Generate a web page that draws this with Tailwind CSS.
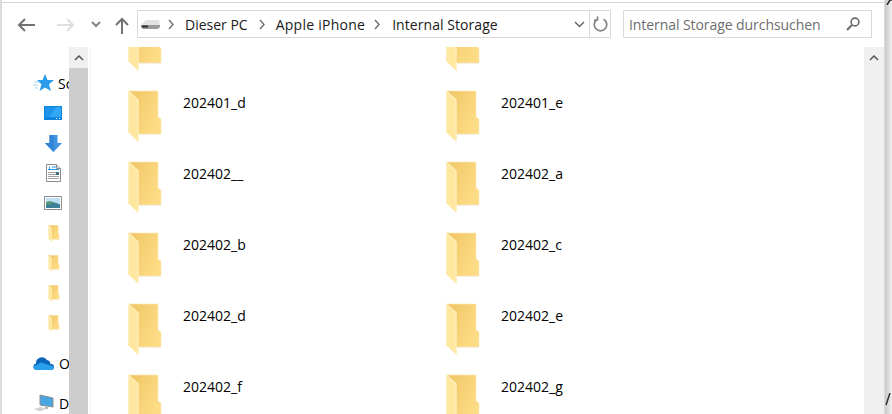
<!DOCTYPE html>
<html lang="en">
<head>
  <meta charset="UTF-8">
  <title>Internal Storage</title>
  <script src="https://cdn.jsdelivr.net/npm/@tailwindcss/browser@4"></script>
</head>
<body class="w-[892px] h-[414px] overflow-hidden bg-white font-['Open_Sans',sans-serif] text-[14px] text-black">
  <svg class="absolute w-0 h-0">
    <defs>
      <linearGradient id="fback" x1="0" x2="1" y1="0" y2="0.6"><stop offset="0" stop-color="#efc565"/><stop offset="1" stop-color="#fedc85"/></linearGradient>
      <g id="folder">
        <path d="M1 1h29v26l3 2v15H8z" fill="url(#fback)" stroke="#fdeab8" stroke-width=".6"/>
        <path d="M0 0l10.500 9.500V52L0 42z" fill="#ffe79f"/>
        <path d="M0 0l10.500 9.500V52l-1-1V10L1 2v39H0z" fill="#fdf0c4"/>
        <path d="M11 44h22v1H11z" fill="#f3f1ea"/>
      </g>
    </defs>
  </svg>
  <div class="flex h-[414px]">
    <div class="w-[885px] h-full flex flex-col pt-[2px] border-l-2 border-r border-[#dcdcdc]">
      <div class="border-t border-[#d6d6d6]"></div>
      <!-- toolbar -->
      <div class="h-[44px] flex items-start pt-[7px] shrink-0">
        <svg class="shrink-0 ml-[15px] mt-[8px]" width="20" height="14" viewBox="0 0 20 14" fill="none" stroke="#737373" stroke-width="2"><path d="M18 7H2M8 1L2 7l6 6"/></svg>
        <svg class="shrink-0 ml-[19px] mt-[8px]" width="20" height="14" viewBox="0 0 20 14" fill="none" stroke="#dedede" stroke-width="2"><path d="M1 7h16M11 1l6 6-6 6"/></svg>
        <svg class="shrink-0 ml-[14px] mt-[11px]" width="12" height="8" viewBox="0 0 12 8" fill="none" stroke="#858585" stroke-width="2"><path d="M2 1l4 4 4-4"/></svg>
        <svg class="shrink-0 ml-[13px] mt-[7px]" width="14" height="17" viewBox="0 0 14 17" fill="none" stroke="#737373" stroke-width="2"><path d="M7 17V2M1 8l6-6 6 6"/></svg>
        <!-- address bar -->
        <div class="ml-[8px] w-[474px] h-[28px] border border-[#d9d9d9] flex items-center text-[#1a1a1a] shrink-0">
          <svg class="shrink-0 ml-[3px]" width="19" height="12" viewBox="0 0 19 12"><path d="M0 7l5-5h13l1 5z" fill="#e2e2e2"/><path d="M0 7h19v2l-2 2H2L0 9z" fill="#9a9a9a"/><path d="M1 7.500h6v2H1z" fill="#2e2e2e"/></svg>
          <svg class="shrink-0 ml-[8px]" width="7" height="11" viewBox="0 0 7 11" fill="none" stroke="#737373" stroke-width="1.5"><path d="M1 1l4 4.500-4 4.500"/></svg>
          <span class="ml-[10px]">Dieser PC</span>
          <svg class="shrink-0 ml-[11px]" width="7" height="11" viewBox="0 0 7 11" fill="none" stroke="#737373" stroke-width="1.5"><path d="M1 1l4 4.500-4 4.500"/></svg>
          <span class="ml-[10px] tracking-[0.25px]">Apple iPhone</span>
          <svg class="shrink-0 ml-[9px]" width="7" height="11" viewBox="0 0 7 11" fill="none" stroke="#737373" stroke-width="1.5"><path d="M1 1l4 4.500-4 4.500"/></svg>
          <span class="ml-[11px] tracking-[0.06px]">Internal Storage</span>
          <svg class="shrink-0 ml-auto mr-[4px]" width="11" height="7" viewBox="0 0 11 7" fill="none" stroke="#666" stroke-width="1.5"><path d="M1 1l4.500 4.500L10 1"/></svg>
          <div class="w-[21px] h-full border-l border-[#d9d9d9] flex items-center justify-center shrink-0">
            <svg width="15" height="16" viewBox="0 0 15 16" fill="none" stroke="#858585" stroke-width="1.7"><path d="M4.500 3.200a6.200 6.200 0 1 0 6 0M4.500 .5v3.500H1"/></svg>
          </div>
        </div>
        <!-- search -->
        <div class="ml-[12px] w-[249px] h-[28px] border border-[#d9d9d9] flex items-center justify-between pl-[5px] pr-[11px] text-[#6d6d6d] shrink-0">
          <span class="tracking-[-0.07px]">Internal Storage durchsuchen</span>
          <svg class="shrink-0" width="14" height="14" viewBox="0 0 14 14" fill="none" stroke="#6b6b6b" stroke-width="1.600"><circle cx="9" cy="5" r="3.900"/><path d="M6 8L1 13" stroke-width="2"/></svg>
        </div>
      </div>
      <!-- body -->
      <div class="flex flex-1 min-h-0">
        <!-- nav pane -->
        <div class="w-[67px] shrink-0 overflow-hidden pt-[21px]">
          <div class="h-[30px] flex items-center pl-[31px] whitespace-nowrap">
            <svg class="shrink-0" width="21" height="18" viewBox="0 0 21 18"><path d="M12 0l2.500 6H21l-5 4.300L18 17l-6-3.500L6.500 17l2-6.700L4 6h5.500z" fill="#2b9bea"/><path d="M1 8h5M0 11h5M2 14h3" stroke="#a8d6f3"/></svg>
            <span class="ml-[4px]">Sc</span>
          </div>
          <div class="h-[30px] flex items-center pl-[42px]">
            <svg width="18" height="14" viewBox="0 0 18 14"><path d="M0 0h18v14H0z" fill="#0f86dd"/><path d="M1 1h16v10H1z" fill="#31a7f6"/><path d="M1 1h11L5 11H1z" fill="#1d95ec"/><path d="M15 12h1v1h-1zM12 12h1v1h-1z" fill="#e8f4fd"/></svg>
          </div>
          <div class="h-[30px] flex items-center pl-[43px]">
            <svg width="17" height="17" viewBox="0 0 17 17"><path d="M4.500 0h8v8H17l-8.500 9L0 8h4.500z" fill="#3f93e2"/><path d="M4.500 0h4v17L0 8h4.500z" fill="#2f84d8"/></svg>
          </div>
          <div class="h-[30px] flex items-center pl-[44px]">
            <svg width="15" height="18" viewBox="0 0 15 18"><path d="M.5.5h10l4 4v13H.5z" fill="#fff" stroke="#8c8c8c"/><path d="M10.500 .5v4h4" fill="#ddd" stroke="#8c8c8c"/><path d="M6 2.500h4v1H6zM2 5h11v1H2z" fill="#1d9be8"/><path d="M3 2.500h1v3H3z" fill="#1d9be8"/><path d="M2 8h8v1H2zM2 10h8v1H2zM2 12h11v1H2zM2 14h11v1H2z" fill="#a3a3a3"/><path d="M10 8h3v3h-3z" fill="#3d6f87"/></svg>
          </div>
          <div class="h-[30px] flex items-center pl-[42px]">
            <svg width="18" height="14" viewBox="0 0 18 14"><path d="M.5.5h17v13H.5z" fill="#fff" stroke="#8c8c8c"/><path d="M2 2h14v5H2z" fill="#bfe0f3"/><path d="M2 7l5-1.500L16 8v4H2z" fill="#3f8099"/><path d="M2 6l4-1 4 2-8 2z" fill="#5a9a72"/></svg>
          </div>
          <div class="h-[30px] flex items-center pl-[46px]">
            <svg width="12" height="17" viewBox="0 0 34 52"><use href="#folder"/></svg>
          </div>
          <div class="h-[30px] flex items-center pl-[46px]">
            <svg width="12" height="17" viewBox="0 0 34 52"><use href="#folder"/></svg>
          </div>
          <div class="h-[30px] flex items-center pl-[46px]">
            <svg width="12" height="17" viewBox="0 0 34 52"><use href="#folder"/></svg>
          </div>
          <div class="h-[30px] flex items-center pl-[46px]">
            <svg width="12" height="17" viewBox="0 0 34 52"><use href="#folder"/></svg>
          </div>
          <div class="h-[30px] mt-[10px] flex items-center pl-[31px]">
            <svg class="shrink-0" width="21" height="14" viewBox="0 0 21 14"><path d="M3.500 14a3.300 3.300 0 0 1-.5-6.500 6 6 0 0 1 11-3.500 4.500 4.500 0 0 1 3.500 4h.5a3 3 0 0 1 0 6z" fill="#0b66bb"/><path d="M3 14q-3-1-2.500-3.500L8 6.500l12.500 4q.5 2.500-2 3.500z" fill="#28a0ea"/></svg>
            <span class="ml-[5px]">O</span>
          </div>
          <div class="h-[30px] mt-[10px] flex items-center pl-[31px]">
            <svg class="shrink-0" width="21" height="18" viewBox="0 0 21 18"><path d="M7 1l13 3v9L7 11z" fill="#48a7e3" stroke="#8e8e8e"/><path d="M12 12l3 1v2h-3z" fill="#bbb"/><path d="M1 15l7-2 5 2-6 2.500z" fill="#d2d2d2"/></svg>
            <span class="ml-[5px]">D</span>
          </div>
        </div>
        <!-- nav scrollbar -->
        <div class="w-[19px] shrink-0 bg-[#cdcdcd] flex flex-col">
          <div class="h-[21px] bg-[#f0f0f0] flex items-center justify-center">
            <svg width="10" height="6" viewBox="0 0 10 6" fill="none" stroke="#555" stroke-width="1.5"><path d="M1 5l4-4 4 4"/></svg>
          </div>
        </div>
        <div class="w-[3px] shrink-0 border-r border-[#f0f0f0]"></div>
        <!-- file list -->
        <div class="flex-1 overflow-hidden">
          <div class="-mt-[28px] ml-[37px] grid grid-cols-[318px_318px] auto-rows-[71px]">
            <div class="flex"><svg class="shrink-0" width="34" height="52" viewBox="0 0 34 52"><use href="#folder"/></svg></div>
            <div class="flex"><svg class="shrink-0" width="34" height="52" viewBox="0 0 34 52"><use href="#folder"/></svg></div>
            <div class="flex"><svg class="shrink-0" width="34" height="52" viewBox="0 0 34 52"><use href="#folder"/></svg><span class="ml-[21px] mt-[2px]">202401_d</span></div>
            <div class="flex"><svg class="shrink-0" width="34" height="52" viewBox="0 0 34 52"><use href="#folder"/></svg><span class="ml-[21px] mt-[2px]">202401_e</span></div>
            <div class="flex"><svg class="shrink-0" width="34" height="52" viewBox="0 0 34 52"><use href="#folder"/></svg><span class="ml-[21px] mt-[2px]">202402__</span></div>
            <div class="flex"><svg class="shrink-0" width="34" height="52" viewBox="0 0 34 52"><use href="#folder"/></svg><span class="ml-[21px] mt-[2px]">202402_a</span></div>
            <div class="flex"><svg class="shrink-0" width="34" height="52" viewBox="0 0 34 52"><use href="#folder"/></svg><span class="ml-[21px] mt-[2px]">202402_b</span></div>
            <div class="flex"><svg class="shrink-0" width="34" height="52" viewBox="0 0 34 52"><use href="#folder"/></svg><span class="ml-[21px] mt-[2px]">202402_c</span></div>
            <div class="flex"><svg class="shrink-0" width="34" height="52" viewBox="0 0 34 52"><use href="#folder"/></svg><span class="ml-[21px] mt-[2px]">202402_d</span></div>
            <div class="flex"><svg class="shrink-0" width="34" height="52" viewBox="0 0 34 52"><use href="#folder"/></svg><span class="ml-[21px] mt-[2px]">202402_e</span></div>
            <div class="flex"><svg class="shrink-0" width="34" height="52" viewBox="0 0 34 52"><use href="#folder"/></svg><span class="ml-[21px] mt-[2px]">202402_f</span></div>
            <div class="flex"><svg class="shrink-0" width="34" height="52" viewBox="0 0 34 52"><use href="#folder"/></svg><span class="ml-[21px] mt-[2px]">202402_g</span></div>
          </div>
        </div>
        <!-- list scrollbar -->
        <div class="w-[20px] shrink-0 bg-[#f0f0f0] flex flex-col items-center pt-[8px]">
          <svg width="10" height="6" viewBox="0 0 10 6" fill="none" stroke="#555" stroke-width="1.5"><path d="M1 5l4-4 4 4"/></svg>
        </div>
      </div>
    </div>
    <!-- window behind -->
    <div class="flex-1 bg-linear-to-r from-[#c9c9c9] to-[#f0f0f0] flex flex-col justify-between overflow-hidden pb-[9px]">
      <svg width="7" height="5" viewBox="0 0 7 5" fill="none" stroke="#222" stroke-width="1.500"><path d="M2 5l3-5h2"/></svg>
      <svg width="7" height="12" viewBox="0 0 7 12" fill="none" stroke="#333" stroke-width="1.500"><path d="M1 12L5 0"/></svg>
    </div>
  </div>
</body>
</html>
